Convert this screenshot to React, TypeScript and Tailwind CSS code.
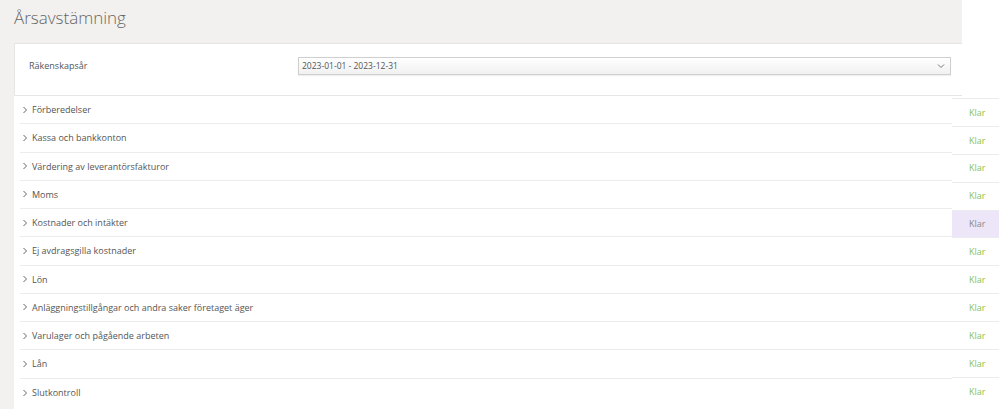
import React from "react";

const rows = [
  "Förberedelser",
  "Kassa och bankkonton",
  "Värdering av leverantörsfakturor",
  "Moms",
  "Kostnader och intäkter",
  "Ej avdragsgilla kostnader",
  "Lön",
  "Anläggningstillgångar och andra saker företaget äger",
  "Varulager och pågående arbeten",
  "Lån",
  "Slutkontroll",
];

function Chevron() {
  return (
    <svg width="6" height="8" viewBox="0 0 6 8" className="shrink-0">
      <path d="M1.5 1 L4.5 4 L1.5 7" fill="none" stroke="#666" strokeWidth="1" />
    </svg>
  );
}

export default function App() {
  return (
    <div
      className="w-[999px] h-[409px] overflow-hidden bg-white flex flex-col text-[#555]"
      style={{ fontFamily: '"Open Sans", "Noto Sans", sans-serif' }}
    >
      <div className="flex h-[43px] shrink-0">
        <div className="w-[962px] bg-[#f2f1ef] pl-[14px] pt-[5px]">
          <h1 className="text-[17px] font-light text-[#666] leading-[26px]">Årsavstämning</h1>
        </div>
      </div>
      <div className="flex h-[53px] shrink-0">
        <div className="w-[14px] bg-[#f2f1ef]" />
        <div className="w-[948px] border-t border-l border-b border-[#e6e6e6] bg-white flex items-center pl-[14px] pr-[11px] pb-[7px]">
          <div className="w-[269px] text-[9px] text-[#555]">Räkenskapsår</div>
          <div className="flex-1 h-[18px] border border-[#cfcfcf] bg-gradient-to-b from-white to-[#f1f1f1] flex items-center justify-between pl-[3px] pr-[5px] shadow-[0_1px_1px_rgba(0,0,0,0.06)]">
            <span className="text-[8.5px] text-[#555]">2023-01-01 - 2023-12-31</span>
            <svg width="8" height="6" viewBox="0 0 8 6">
              <path d="M1 1.5 L4 4.5 L7 1.5" fill="none" stroke="#777" strokeWidth="1" />
            </svg>
          </div>
        </div>
      </div>
      <div className="flex flex-1">
        <div className="w-[14px] bg-[#f2f1ef]" />
        <div className="w-[938px] flex flex-col pl-[6px]">
          {rows.map((r, i) => (
            <div
              key={r}
              className={`h-[28.25px] shrink-0 flex items-center gap-[4px] pl-[2px] ${
                i < rows.length - 1 ? "border-b border-[#ececec]" : ""
              }`}
            >
              <Chevron />
              <span className="text-[9px] text-[#555] leading-none">{r}</span>
            </div>
          ))}
        </div>
        <div className="w-[47px] flex flex-col pt-[2px]">
          {rows.map((r, i) => (
            <div
              key={r}
              className={`h-[27.9px] shrink-0 border-t border-[#ececec] flex items-center pl-[17px] text-[9px] ${
                i === 4 ? "bg-[#ece6f8] text-[#888]" : "text-[#8cc152]"
              }`}
            >
              Klar
            </div>
          ))}
        </div>
      </div>
    </div>
  );
}
